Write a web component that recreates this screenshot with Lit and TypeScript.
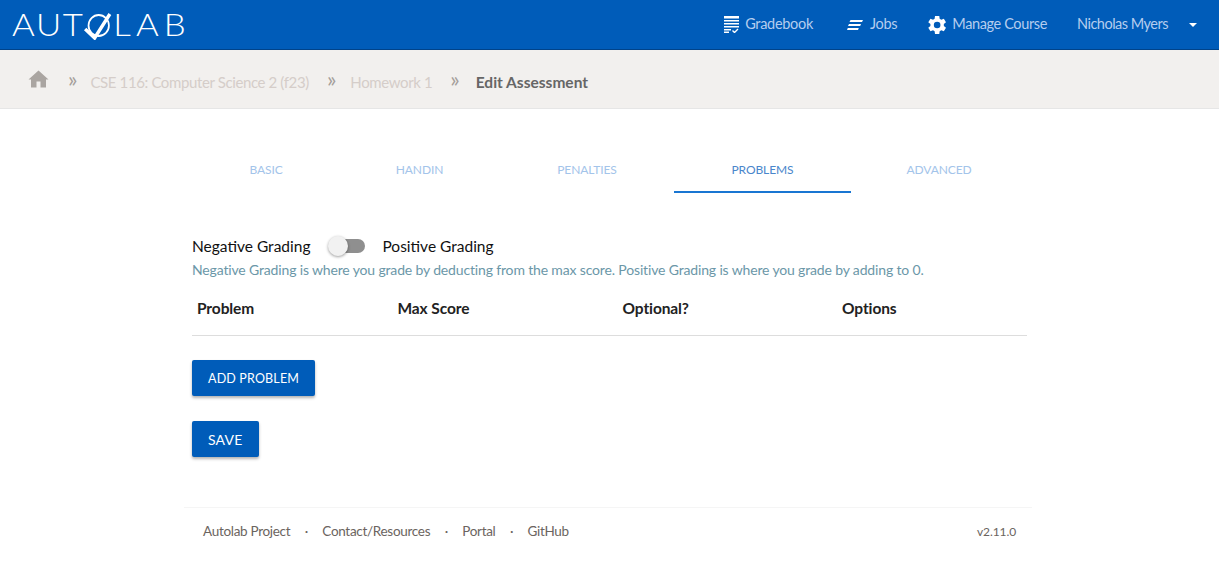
import { LitElement, html, css } from "lit";
import { customElement } from "lit/decorators.js";

@customElement("app-root")
export class AppRoot extends LitElement {
  static styles = css`
    :host { display: block; font-family: "Lato", "Open Sans", sans-serif; background: #fff; height: 584px; overflow: hidden; }
    a { text-decoration: none; }
    .nav { height: 49px; background: #005cb9; border-bottom: 1px solid #00438a; display: flex; align-items: center; justify-content: space-between; padding: 0 22px 0 12px; }
    .logo { display: flex; align-items: center; color: #fff; font-size: 31px; font-weight: 300; letter-spacing: 1.5px; line-height: 1; transform: scaleX(1.12); transform-origin: left center; }
    .lab { letter-spacing: 4.5px; }
    .logo svg { width: 26px; height: 30px; margin: 0 0.6px 0 -1px; }
    .menu { display: flex; align-items: center; font-size: 14.5px; letter-spacing: -.3px; color: #b5cdee; }
    .item { display: flex; align-items: center; gap: 7px; }
    .item svg { fill: #fff; display: block; }
    .t { padding-bottom: 2px; }
    .gb { margin-right: 34px; gap: 6px; }
    .jobs { margin-right: 31px; }
    .mc { margin-right: 30px; gap: 6px; letter-spacing: -.38px; }
    .user { letter-spacing: -.5px; }
    .caret { width: 0; height: 0; border: 4.5px solid transparent; border-top: 4.5px solid #fff; border-bottom: 0; margin-left: 14px; }
    .crumbs { height: 58px; background: #f2f0ee; border-bottom: 1px solid #e6e6e6; display: flex; align-items: center; padding-left: 28px; font-size: 15px; letter-spacing: -.38px; color: #d5cdc9; }
    .crumbs svg { fill: #aaa5a1; display: block; }
    .crumbs a, .current { padding-top: 6px; }
    .sep { color: #a59f9b; margin: 0 14px 0 18px; font-size: 22px; letter-spacing: 0; padding-bottom: 2px; }
    .sep.first { margin-left: 19px; margin-right: 13px; }
    .sep.last { margin-right: 16px; }
    .current { color: #666; font-weight: 700; font-size: 15.5px; letter-spacing: 0; }
    .main { width: 835px; margin-left: 192px; }
    .tabs { display: flex; margin: 41px 0 0 1px; }
    .tab { height: 43px; display: flex; align-items: center; justify-content: center; padding-bottom: 4px; box-sizing: border-box; font-size: 12px; letter-spacing: -.1px; color: #a3c4ea; }
    .tab.active { color: #4a86cb; border-bottom: 2px solid #1976d2; padding-bottom: 2px; }
    .switch-row { display: flex; align-items: center; margin-top: 41px; height: 24px; font-size: 15.5px; color: #111; }
    .track { width: 28px; height: 14px; border-radius: 7px; background: #8f8f8f; position: relative; margin: 0 17px 0 27px; }
    .knob { position: absolute; left: -9px; top: -3px; width: 20px; height: 20px; border-radius: 50%; background: #f1f1f1; box-shadow: 0 1px 3px rgba(0,0,0,.4); }
    .help { font-size: 14px; letter-spacing: -.155px; color: #6b97a8; margin: 2px 0 1px; line-height: 20px; white-space: nowrap; }
    .thead { display: grid; grid-template-columns: 200.5px 225px 219.5px 1fr; padding: 0 0 1px 5px; height: 55px; box-sizing: border-box; align-items: center; border-bottom: 1px solid #ddd; font-size: 15.5px; letter-spacing: -.1px; font-weight: 700; color: #222; }
    .btn { display: inline-flex; align-items: center; justify-content: center; height: 36px; padding: 0 16px; box-sizing: border-box; background: #005cb9; color: #fff; font-size: 12.5px; letter-spacing: .17px; border-radius: 2px; box-shadow: 0 2px 3px rgba(0,0,0,.3); }
    .btn.save { font-size: 14px; letter-spacing: .2px; }
    .btns { display: flex; flex-direction: column; align-items: flex-start; gap: 25px; margin-top: 24px; }
    .footer { width: 848px; margin: 50px 0 0 184px; border-top: 1px solid #f5f5f5; display: flex; justify-content: space-between; align-items: center; padding: 15px 16px 0 19px; box-sizing: border-box; font-size: 13.5px; letter-spacing: -.3px; color: #6b6460; }
    .links { display: flex; gap: 14.4px; }
    .ver { font-size: 12px; letter-spacing: -.1px; }
  `;
  render() {
    return html`
      <div class="nav">
        <div class="logo">AUT<svg viewBox="0 0 30 30" preserveAspectRatio="none" fill="none" stroke="#fff"><circle cx="15.500" cy="15.500" r="10.500" stroke-width="1.800"/><path d="M1.500 19 L11.300 28 L27 4" stroke-width="3.500"/></svg><span class="lab">LAB</span></div>
        <div class="menu">
          <a class="item gb"><svg width="15" height="17" viewBox="0 0 15 17"><path d="M0 0h15v2.500H0zM0 4h15v1.500H0zM0 7h15v1.500H0zM0 10h15v1.500H0zM0 13h7v1.500H0zM0 15.500h5V17H0z"/><path d="M8.500 14.500l2 2 3.500-3.500" fill="none" stroke="#fff" stroke-width="1.400"/></svg><span class="t">Gradebook</span></a>
          <a class="item jobs"><svg width="16" height="10" viewBox="0 0 16 10"><path d="M3.500 0H16l-1 2H2.500zM2 4h12l-.8 2H1zM.8 8h11l-.8 2H0z"/></svg><span class="t">Jobs</span></a>
          <a class="item mc"><svg width="18" height="18" viewBox="2.700 2.500 19 19"><path d="M19.400 13a7.500 7.500 0 0 0 0-2l2.300-1.800-2.300-3.900-2.700 1.100a7.500 7.500 0 0 0-1.700-1L14.600 2.500h-4.500l-.4 2.900a7.500 7.500 0 0 0-1.700 1L5.300 5.300 3 9.200 5.300 11a7.500 7.500 0 0 0 0 2L3 14.800l2.300 3.900 2.700-1.100a7.500 7.500 0 0 0 1.700 1l.4 2.900h4.500l.4-2.900a7.500 7.500 0 0 0 1.700-1l2.700 1.100 2.300-3.900zM12.350 15.500a3.500 3.500 0 1 1 0-7 3.500 3.500 0 0 1 0 7z"/></svg><span class="t">Manage Course</span></a>
          <a class="item user"><span class="t">Nicholas Myers</span><span class="caret"></span></a>
        </div>
      </div>
      <div class="crumbs">
        <svg width="21" height="18" viewBox="0 0 21 18"><path d="M10.500 0.500 L0.500 9.500 L3 9.500 V17.500 H8.500 V11.500 H12.500 V17.500 H18 V9.500 H20.500 Z"/></svg>
        <span class="sep first">»</span><a>CSE 116: Computer Science 2 (f23)</a>
        <span class="sep">»</span><a>Homework 1</a>
        <span class="sep last">»</span><span class="current">Edit Assessment</span>
      </div>
      <div class="main">
        <div class="tabs">
          <a class="tab" style="width:146px">BASIC</a>
          <a class="tab" style="width:161px">HANDIN</a>
          <a class="tab" style="width:174px">PENALTIES</a>
          <a class="tab active" style="width:177px">PROBLEMS</a>
          <a class="tab" style="width:176px">ADVANCED</a>
        </div>
        <div class="switch-row">Negative Grading<span class="track"><span class="knob"></span></span>Positive Grading</div>
        <div class="help">Negative Grading is where you grade by deducting from the max score. Positive Grading is where you grade by adding to 0.</div>
        <div class="thead"><span>Problem</span><span>Max Score</span><span>Optional?</span><span>Options</span></div>
        <div class="btns"><a class="btn">ADD PROBLEM</a><a class="btn save">SAVE</a></div>
      </div>
      <div class="footer">
        <div class="links"><a>Autolab Project</a><span>·</span><a>Contact/Resources</a><span>·</span><a>Portal</a><span>·</span><a>GitHub</a></div>
        <span class="ver">v2.11.0</span>
      </div>
    `;
  }
}
